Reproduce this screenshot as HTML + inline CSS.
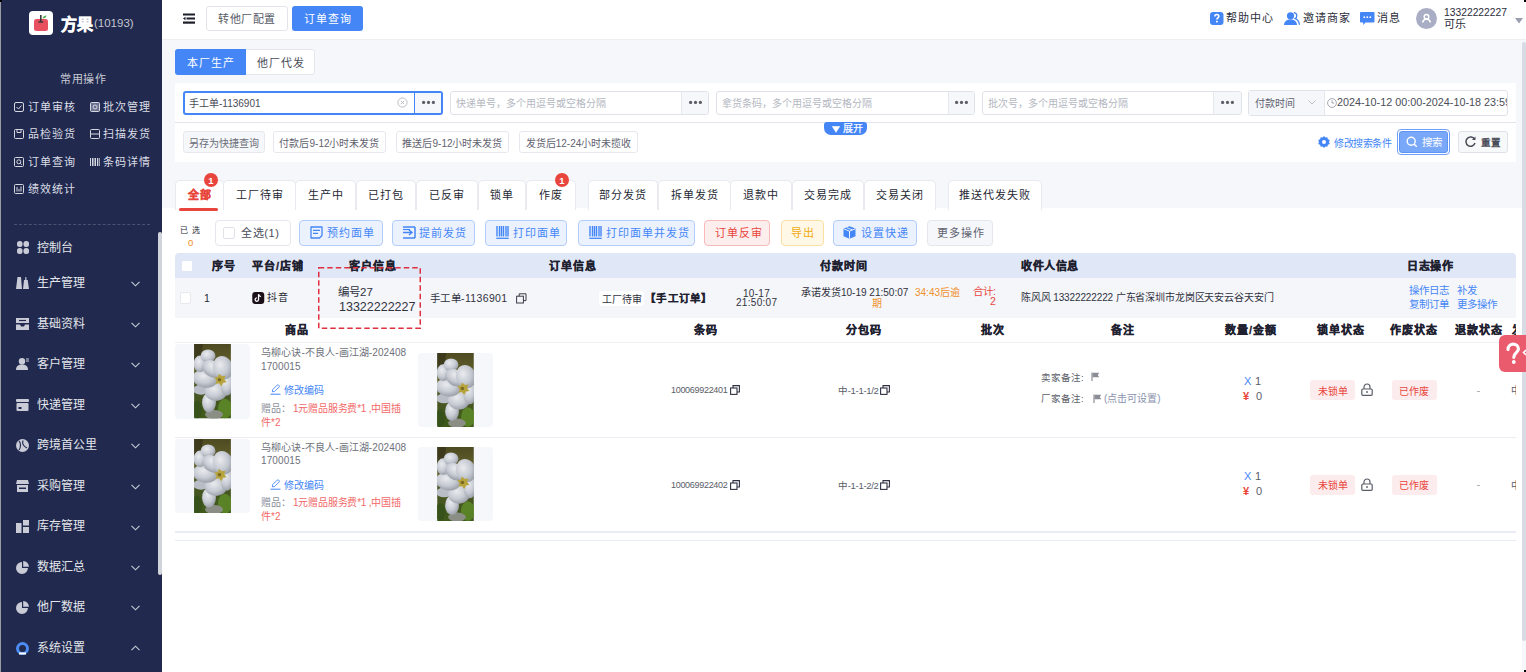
<!DOCTYPE html>
<html lang="zh-CN"><head><meta charset="utf-8">
<style>
*{box-sizing:border-box;margin:0;padding:0}
html,body{width:1526px;height:672px;overflow:hidden;background:#fff;font-family:"Liberation Sans",sans-serif;color:#333}
.a{position:absolute}
.t{white-space:nowrap}
.c{display:flex;align-items:center;justify-content:center;white-space:nowrap}
.sb{left:0;top:0;width:162px;height:672px;background:#212a4e;border-left:1px solid #9a9ca4}
.sbq{font-size:11px;letter-spacing:1px;line-height:16px;color:#dcdee6}
.mi{font-size:12px;line-height:18px;color:#e4e6ec}
.chev{width:9px;height:6px}
.hdr{left:162px;top:0;width:1364px;height:40px;background:#fff;border-bottom:1px solid #eceef2}
.page{left:162px;top:40px;width:1364px;height:632px;background:#f5f7fb}
.tab{top:179.5px;height:30px;background:#fff;border:1px solid #e8eaf0;border-bottom:none;border-radius:5px 5px 0 0}
.badge{width:14px;height:14px;border-radius:50%;background:#e8453c;color:#fff;font-size:9.5px;font-weight:bold}
.btnb{top:220px;height:26px;background:#ebf2fe;border:1px solid #b3cdfb;border-radius:4px}
.bt{top:224px;font-size:11px;line-height:18px;letter-spacing:1px}
.th{top:258px;font-size:11px;letter-spacing:1px;line-height:16px;font-weight:bold;color:#1f2130;-webkit-text-stroke:0.3px #1f2130}
.pn{font-size:10px;line-height:16px;color:#6e717b;letter-spacing:0.1px}
</style></head><body>
<!-- ================= SIDEBAR ================= -->
<div class="a sb"></div>
<div class="a" style="left:0;top:0;width:2px;height:2px;background:#000"></div>
<div class="a" style="left:29px;top:11px;width:24px;height:24px;background:#fff;border-radius:4px"></div>
<svg class="a" style="left:29px;top:11px" width="24" height="24" viewBox="0 0 24 24">
<rect x="5" y="8" width="14" height="12" rx="2.5" fill="#e8505f"/>
<rect x="11" y="4" width="1.6" height="7" fill="#3a3a3a"/><rect x="9.3" y="10.3" width="5" height="1.4" fill="#3a3a3a"/>
<path d="M13.5 7.5c0.5-2 2-3 4-3-0.3 2-1.8 3-4 3z" fill="#4caf50"/>
</svg>
<div class="a t" style="left:61px;top:12px;font-size:16px;font-weight:bold;color:#fff;line-height:26px;-webkit-text-stroke:0.6px #fff">方果</div>
<div class="a t" style="left:94px;top:13px;font-size:11.5px;color:#c4c6d0;line-height:20px">(10193)</div>
<div class="a t" style="left:60px;top:71px;font-size:11px;letter-spacing:0.5px;color:#c9cbd5;line-height:16px">常用操作</div>

<svg class="a" style="left:14px;top:101.5px" width="10" height="10" viewBox="0 0 10 10"><rect x="0.5" y="0.5" width="9" height="9" rx="1.5" fill="none" stroke="#d6d8e0"/><path d="M2.5 5l2 2 3-3.5" fill="none" stroke="#d6d8e0"/></svg>
<div class="a t sbq" style="left:28px;top:98.5px">订单审核</div>
<svg class="a" style="left:90px;top:101.5px" width="10" height="10" viewBox="0 0 10 10"><rect x="0.5" y="0.5" width="9" height="9" rx="1" fill="#6b7190" stroke="#d6d8e0"/><circle cx="5" cy="5" r="2" fill="none" stroke="#d6d8e0"/></svg>
<div class="a t sbq" style="left:103px;top:98.5px">批次管理</div>
<svg class="a" style="left:14px;top:129px" width="10" height="10" viewBox="0 0 10 10"><rect x="0.5" y="0.5" width="9" height="9" rx="1" fill="none" stroke="#d6d8e0"/><path d="M3 0.5v3h4v-3" fill="none" stroke="#d6d8e0"/></svg>
<div class="a t sbq" style="left:28px;top:126px">品检验货</div>
<svg class="a" style="left:90px;top:129px" width="10" height="10" viewBox="0 0 10 10"><rect x="0.5" y="0.5" width="9" height="9" rx="1" fill="none" stroke="#d6d8e0"/><path d="M0.5 5h9" stroke="#d6d8e0"/></svg>
<div class="a t sbq" style="left:103px;top:126px">扫描发货</div>
<svg class="a" style="left:14px;top:156.5px" width="10" height="10" viewBox="0 0 10 10"><rect x="0.5" y="0.5" width="9" height="9" rx="1" fill="none" stroke="#d6d8e0"/><circle cx="4.8" cy="4.8" r="2" fill="none" stroke="#d6d8e0"/><path d="M6.3 6.3l1.5 1.5" stroke="#d6d8e0"/></svg>
<div class="a t sbq" style="left:28px;top:153.5px">订单查询</div>
<svg class="a" style="left:90px;top:156.5px" width="10" height="10" viewBox="0 0 10 10"><path d="M0.5 1v8M2.5 1v8M4 1v8M5.5 1v8M7.5 1v8M9.2 1v8" stroke="#d6d8e0"/></svg>
<div class="a t sbq" style="left:103px;top:153.5px">条码详情</div>
<svg class="a" style="left:14px;top:184px" width="10" height="10" viewBox="0 0 10 10"><rect x="0.5" y="0.5" width="9" height="9" rx="1" fill="none" stroke="#d6d8e0"/><path d="M3 3v4.5M5 5v2.5M7 2.5v5" stroke="#d6d8e0"/></svg>
<div class="a t sbq" style="left:28px;top:181px">绩效统计</div>

<div class="a" style="left:14px;top:224px;width:136px;height:0;border-top:1px dashed #4a5272"></div>
<div class="a" style="left:158px;top:232px;width:4px;height:343px;background:#d2d4dc;border-radius:2px"></div>

<!-- menu -->
<svg class="a" style="left:17px;top:241px" width="12" height="13" viewBox="0 0 12 13"><rect x="0" y="0" width="5.5" height="6" rx="2.5" fill="#c9cbd6"/><rect x="6.5" y="0" width="5.5" height="6" rx="2.5" fill="#c9cbd6"/><rect x="0" y="7" width="5.5" height="6" rx="2.5" fill="#c9cbd6"/><rect x="6.5" y="7" width="5.5" height="6" rx="2.5" fill="#c9cbd6"/></svg>
<div class="a t mi" style="left:37px;top:239px">控制台</div>

<svg class="a" style="left:16px;top:277px" width="13" height="12" viewBox="0 0 13 12"><path d="M0 12L1.5 0h3.5L6 12z M7 12L8 3h1.2L9.3 0h1L10.5 3h1.2L13 12z" fill="#c9cbd6"/></svg>
<div class="a t mi" style="left:37px;top:274px">生产管理</div>
<svg class="a chev" style="left:131px;top:281px" viewBox="0 0 9 6"><path d="M0.5 0.8L4.5 4.8 8.5 0.8" fill="none" stroke="#c9cbd6" stroke-width="1.1"/></svg>

<svg class="a" style="left:16px;top:318px" width="13" height="12" viewBox="0 0 13 12"><path d="M0 0h13v5H0z M0 6.5h4l1 2h3l1-2h4V12H0z" fill="#c9cbd6"/><path d="M3 2.5h7" stroke="#212a4e" stroke-width="1.2"/></svg>
<div class="a t mi" style="left:37px;top:315px">基础资料</div>
<svg class="a chev" style="left:131px;top:322px" viewBox="0 0 9 6"><path d="M0.5 0.8L4.5 4.8 8.5 0.8" fill="none" stroke="#c9cbd6" stroke-width="1.1"/></svg>

<svg class="a" style="left:16px;top:358px" width="13" height="12" viewBox="0 0 13 12"><circle cx="6" cy="3.2" r="3.2" fill="#c9cbd6"/><path d="M0 12c0-4 2.5-5.5 6-5.5s6 1.5 6 5.5z" fill="#c9cbd6"/><path d="M10 1h3M10 3h3" stroke="#c9cbd6"/></svg>
<div class="a t mi" style="left:37px;top:355px">客户管理</div>
<svg class="a chev" style="left:131px;top:362px" viewBox="0 0 9 6"><path d="M0.5 0.8L4.5 4.8 8.5 0.8" fill="none" stroke="#c9cbd6" stroke-width="1.1"/></svg>

<svg class="a" style="left:16px;top:399px" width="13" height="12" viewBox="0 0 13 12"><rect x="0" y="0" width="13" height="3" rx="1" fill="#c9cbd6"/><rect x="0.5" y="4" width="12" height="8" rx="1" fill="#c9cbd6"/><rect x="2.5" y="8" width="3" height="2" fill="#212a4e"/></svg>
<div class="a t mi" style="left:37px;top:396px">快递管理</div>
<svg class="a chev" style="left:131px;top:403px" viewBox="0 0 9 6"><path d="M0.5 0.8L4.5 4.8 8.5 0.8" fill="none" stroke="#c9cbd6" stroke-width="1.1"/></svg>

<svg class="a" style="left:16px;top:439px" width="13" height="13" viewBox="0 0 13 13"><circle cx="6.5" cy="6.5" r="6.5" fill="#c9cbd6"/><path d="M3 2c2 2 2 6 0 9M7 1.5c-1 3 1 6 4 7.5" fill="none" stroke="#212a4e" stroke-width="1.1"/></svg>
<div class="a t mi" style="left:37px;top:436px">跨境首公里</div>
<svg class="a chev" style="left:131px;top:443px" viewBox="0 0 9 6"><path d="M0.5 0.8L4.5 4.8 8.5 0.8" fill="none" stroke="#c9cbd6" stroke-width="1.1"/></svg>

<svg class="a" style="left:16px;top:480px" width="13" height="12" viewBox="0 0 13 12"><path d="M1 0h11l1 4H0z" fill="#c9cbd6"/><rect x="1" y="5" width="11" height="7" fill="#c9cbd6"/><rect x="3" y="7.5" width="7" height="1.5" fill="#212a4e"/></svg>
<div class="a t mi" style="left:37px;top:477px">采购管理</div>
<svg class="a chev" style="left:131px;top:484px" viewBox="0 0 9 6"><path d="M0.5 0.8L4.5 4.8 8.5 0.8" fill="none" stroke="#c9cbd6" stroke-width="1.1"/></svg>

<svg class="a" style="left:16px;top:520px" width="13" height="13" viewBox="0 0 13 13"><rect x="0" y="3" width="5.5" height="10" fill="#c9cbd6"/><rect x="7" y="0" width="6" height="5.5" fill="#c9cbd6"/><rect x="7" y="7" width="6" height="6" fill="#c9cbd6"/></svg>
<div class="a t mi" style="left:37px;top:517px">库存管理</div>
<svg class="a chev" style="left:131px;top:525px" viewBox="0 0 9 6"><path d="M0.5 0.8L4.5 4.8 8.5 0.8" fill="none" stroke="#c9cbd6" stroke-width="1.1"/></svg>

<svg class="a" style="left:16px;top:561px" width="13" height="13" viewBox="0 0 13 13"><path d="M6 1A6 6 0 1 0 12 7H6z" fill="#c9cbd6"/><path d="M7.2 0A5.8 5.8 0 0 1 13 5.8H7.2z" fill="#c9cbd6"/></svg>
<div class="a t mi" style="left:37px;top:558px">数据汇总</div>
<svg class="a chev" style="left:131px;top:565px" viewBox="0 0 9 6"><path d="M0.5 0.8L4.5 4.8 8.5 0.8" fill="none" stroke="#c9cbd6" stroke-width="1.1"/></svg>

<svg class="a" style="left:16px;top:601px" width="13" height="13" viewBox="0 0 13 13"><path d="M6 1A6 6 0 1 0 12 7H6z" fill="#c9cbd6"/><path d="M7.2 0A5.8 5.8 0 0 1 13 5.8H7.2z" fill="#c9cbd6"/></svg>
<div class="a t mi" style="left:37px;top:598px">他厂数据</div>
<svg class="a chev" style="left:131px;top:605px" viewBox="0 0 9 6"><path d="M0.5 0.8L4.5 4.8 8.5 0.8" fill="none" stroke="#c9cbd6" stroke-width="1.1"/></svg>

<svg class="a" style="left:16px;top:642px" width="13" height="13" viewBox="0 0 13 13"><circle cx="6.5" cy="6.5" r="5" fill="none" stroke="#4b8cf5" stroke-width="3"/><path d="M3 11.5h7" stroke="#fff" stroke-width="2"/></svg>
<div class="a t mi" style="left:37px;top:639px">系统设置</div>
<svg class="a chev" style="left:131px;top:645px" viewBox="0 0 9 6"><path d="M0.5 5.2L4.5 1.2 8.5 5.2" fill="none" stroke="#c9cbd6" stroke-width="1.1"/></svg>

<!-- ================= HEADER ================= -->
<div class="a hdr"></div>
<svg class="a" style="left:183px;top:13px" width="12" height="11" viewBox="0 0 12 11"><rect x="0" y="0.5" width="12" height="2" fill="#1d1d2b"/><rect x="3.5" y="4.5" width="8.5" height="2" fill="#1d1d2b"/><path d="M0 5.5L2.5 3.8v3.4z" fill="#1d1d2b"/><rect x="0" y="8.5" width="12" height="2.2" fill="#1d1d2b"/></svg>
<div class="a c" style="left:206px;top:6px;width:82px;height:25px;border:1px solid #e2e4ea;border-radius:3px;background:#fff;font-size:11px;letter-spacing:0.5px;color:#555a66;padding-bottom:2px">转他厂配置</div>
<div class="a c" style="left:292px;top:6px;width:71px;height:25px;border-radius:3px;background:#4486f6;font-size:11px;letter-spacing:1px;color:#fff;padding-bottom:2px">订单查询</div>

<svg class="a" style="left:1210px;top:12px" width="14" height="13" viewBox="0 0 14 13"><rect x="0" y="0" width="13.5" height="13" rx="3" fill="#4486f6"/><path d="M4.8 4.6c0-1.3 0.9-2.1 2-2.1s2 0.7 2 1.9c0 1.3-1.9 1.5-1.9 3" fill="none" stroke="#fff" stroke-width="1.6"/><rect x="6" y="8.8" width="1.8" height="1.6" fill="#fff"/></svg>
<div class="a t" style="left:1226px;top:10px;font-size:11px;letter-spacing:1px;line-height:17px;color:#2b2d3a">帮助中心</div>
<svg class="a" style="left:1284px;top:12px" width="17" height="13" viewBox="0 0 17 13"><circle cx="6.5" cy="3.8" r="3.6" fill="#4486f6"/><path d="M0 13c0-3.6 2.8-5.6 6.5-5.6S13 9.4 13 13z" fill="#4486f6"/><path d="M9.8 0.6c1.8 0.2 3 1.5 3 3.2 0 1.2-0.6 2.2-1.6 2.8 2.4 0.9 4 2.8 4.2 6.2" fill="none" stroke="#4486f6" stroke-width="1.3"/></svg>
<div class="a t" style="left:1303px;top:10px;font-size:11px;letter-spacing:1px;line-height:17px;color:#2b2d3a">邀请商家</div>
<svg class="a" style="left:1360px;top:12px" width="15" height="14" viewBox="0 0 15 14"><path d="M0 1a1 1 0 0 1 1-1h12.5a1 1 0 0 1 1 1v8.5a1 1 0 0 1-1 1H5.5L3.2 13V10.5H1a1 1 0 0 1-1-1z" fill="#4486f6"/><circle cx="4.3" cy="5.2" r="0.9" fill="#fff"/><circle cx="7.3" cy="5.2" r="0.9" fill="#fff"/><circle cx="10.3" cy="5.2" r="0.9" fill="#fff"/></svg>
<div class="a t" style="left:1377px;top:10px;font-size:11px;letter-spacing:1px;line-height:17px;color:#2b2d3a">消息</div>
<div class="a" style="left:1416px;top:8px;width:21px;height:21px;border-radius:50%;background:#a9aec4"></div>
<svg class="a" style="left:1416px;top:8px" width="21" height="21" viewBox="0 0 21 21"><circle cx="10.5" cy="8.8" r="2.3" fill="none" stroke="#fff" stroke-width="1.5"/><path d="M6.5 14.5c0.8-2.5 2.2-3.6 4-3.6s3.2 1.1 4 3.6" fill="none" stroke="#fff" stroke-width="1.5"/></svg>
<div class="a t" style="left:1444px;top:6px;font-size:10.3px;line-height:13px;color:#2b2d3a">13322222227</div>
<div class="a t" style="left:1444px;top:16px;font-size:11px;line-height:16px;color:#2b2d3a">可乐</div>
<svg class="a" style="left:1515px;top:18px" width="8" height="6" viewBox="0 0 8 6"><path d="M0 0h8L4 5.5z" fill="#9a9eae"/></svg>
<div class="a" style="left:1524px;top:0;width:2px;height:2px;background:#000"></div>

<!-- ================= PAGE ================= -->
<div class="a page"></div>
<!-- seg -->
<div class="a" style="left:175px;top:49px;width:140px;height:26px;border:1px solid #e6e8ee;border-radius:3px;background:#fff"></div>
<div class="a c" style="left:175px;top:49px;width:71px;height:26px;border-radius:3px 0 0 3px;background:#4486f6;font-size:11px;letter-spacing:1px;color:#fff">本厂生产</div>
<div class="a c" style="left:246px;top:49px;width:69px;height:26px;font-size:11px;letter-spacing:1px;color:#4a4d58">他厂代发</div>

<!-- search panel -->
<div class="a" style="left:175px;top:83px;width:1341px;height:79px;background:#fff"></div>
<!-- input1 -->
<div class="a" style="left:183px;top:91px;width:260px;height:24px;border:2px solid #4486f6;border-radius:3px;background:#fff"></div>
<div class="a" style="left:414px;top:93px;width:27px;height:20px;background:#f5f7fa;border-left:1.3px solid #4486f6"></div>
<div class="a t" style="left:189px;top:96px;font-size:10px;line-height:16px;color:#4a4d58">手工单-1136901</div>
<svg class="a" style="left:397px;top:97px" width="11" height="11" viewBox="0 0 11 11"><circle cx="5.5" cy="5.5" r="4.6" fill="none" stroke="#b4b6bd" stroke-width="0.9"/><path d="M3.8 3.8l3.4 3.4M7.2 3.8l-3.4 3.4" stroke="#b4b6bd" stroke-width="0.9"/></svg>
<svg class="a" style="left:421px;top:100px" width="15" height="5" viewBox="0 0 15 5"><circle cx="2.6" cy="2.4" r="1.6" fill="#5a5d66"/><circle cx="7.5" cy="2.4" r="1.6" fill="#5a5d66"/><circle cx="12.4" cy="2.4" r="1.6" fill="#5a5d66"/></svg>
<!-- input2 -->
<div class="a" style="left:450px;top:91px;width:259px;height:24px;border:1px solid #dfe2e8;border-radius:3px;background:#fff"></div>
<div class="a" style="left:681px;top:92px;width:27px;height:22px;background:#f5f7fa;border-left:1px solid #e6e8ee;border-radius:0 2px 2px 0"></div>
<div class="a t" style="left:456px;top:96px;font-size:10px;line-height:16px;color:#b4b7bf">快递单号，多个用逗号或空格分隔</div>
<svg class="a" style="left:688px;top:100px" width="15" height="5" viewBox="0 0 15 5"><circle cx="2.6" cy="2.4" r="1.6" fill="#5a5d66"/><circle cx="7.5" cy="2.4" r="1.6" fill="#5a5d66"/><circle cx="12.4" cy="2.4" r="1.6" fill="#5a5d66"/></svg>
<!-- input3 -->
<div class="a" style="left:716px;top:91px;width:259px;height:24px;border:1px solid #dfe2e8;border-radius:3px;background:#fff"></div>
<div class="a" style="left:948px;top:92px;width:26px;height:22px;background:#f5f7fa;border-left:1px solid #e6e8ee;border-radius:0 2px 2px 0"></div>
<div class="a t" style="left:722px;top:96px;font-size:10px;line-height:16px;color:#b4b7bf">拿货条码，多个用逗号或空格分隔</div>
<svg class="a" style="left:954px;top:100px" width="15" height="5" viewBox="0 0 15 5"><circle cx="2.6" cy="2.4" r="1.6" fill="#5a5d66"/><circle cx="7.5" cy="2.4" r="1.6" fill="#5a5d66"/><circle cx="12.4" cy="2.4" r="1.6" fill="#5a5d66"/></svg>
<!-- input4 -->
<div class="a" style="left:982px;top:91px;width:260px;height:24px;border:1px solid #dfe2e8;border-radius:3px;background:#fff"></div>
<div class="a" style="left:1213px;top:92px;width:28px;height:22px;background:#f5f7fa;border-left:1px solid #e6e8ee;border-radius:0 2px 2px 0"></div>
<div class="a t" style="left:988px;top:96px;font-size:10px;line-height:16px;color:#b4b7bf">批次号，多个用逗号或空格分隔</div>
<svg class="a" style="left:1220px;top:100px" width="15" height="5" viewBox="0 0 15 5"><circle cx="2.6" cy="2.4" r="1.6" fill="#5a5d66"/><circle cx="7.5" cy="2.4" r="1.6" fill="#5a5d66"/><circle cx="12.4" cy="2.4" r="1.6" fill="#5a5d66"/></svg>
<!-- date -->
<div class="a" style="left:1248px;top:90px;width:260px;height:26px;border:1px solid #dfe2e8;border-radius:3px;background:#fff;overflow:hidden"></div>
<div class="a" style="left:1249px;top:91px;width:76px;height:24px;background:#f5f7fa;border-right:1px solid #e6e8ee"></div>
<div class="a t" style="left:1255px;top:96px;font-size:10px;line-height:16px;color:#5f6270">付款时间</div>
<svg class="a" style="left:1308px;top:100px" width="8" height="5" viewBox="0 0 8 5"><path d="M0.5 0.5L4 4 7.5 0.5" fill="none" stroke="#b4b7bf" stroke-width="0.9"/></svg>
<svg class="a" style="left:1327px;top:98px" width="10" height="10" viewBox="0 0 10 10"><circle cx="5" cy="5" r="4.4" fill="none" stroke="#9a9da8" stroke-width="0.9"/><path d="M5 2.3V5h2.3" fill="none" stroke="#9a9da8" stroke-width="0.9"/></svg>
<div class="a" style="left:1337px;top:91px;width:170px;height:24px;overflow:hidden"><div class="a t" style="left:0;top:3px;font-size:10.8px;line-height:17px;color:#4a4d58">2024-10-12 00:00-2024-10-18 23:59</div></div>

<div class="a" style="left:175px;top:122px;width:1341px;height:1px;background:#e2e5ec"></div>
<div class="a" style="left:824px;top:122px;width:43px;height:13px;background:#4486f6;border-radius:3px 3px 7px 7px"></div>
<svg class="a" style="left:832px;top:126px" width="8" height="7" viewBox="0 0 8 7"><path d="M0.3 0.5h7.4L4 6.3z" fill="#fff" stroke="#fff" stroke-width="0.6" stroke-linejoin="round"/></svg>
<div class="a t" style="left:842.5px;top:121px;font-size:10px;line-height:15px;color:#fff;-webkit-text-stroke:0.2px #fff">展开</div>

<!-- quick btns -->
<div class="a c" style="left:183px;top:131px;width:82px;height:22px;background:#f5f7fa;border:1px solid #e6e8ee;border-radius:3px;font-size:10px;color:#6a6d78">另存为快捷查询</div>
<div class="a c" style="left:273px;top:131px;width:113px;height:22px;background:#fff;border:1px solid #e6e8ee;border-radius:3px;font-size:10px;color:#5f6270">付款后9-12小时未发货</div>
<div class="a c" style="left:396px;top:131px;width:113px;height:22px;background:#fff;border:1px solid #e6e8ee;border-radius:3px;font-size:10px;color:#5f6270">推送后9-12小时未发货</div>
<div class="a c" style="left:519px;top:131px;width:119px;height:22px;background:#fff;border:1px solid #e6e8ee;border-radius:3px;font-size:10px;color:#5f6270">发货后12-24小时未揽收</div>

<svg class="a" style="left:1318px;top:136px" width="12" height="12" viewBox="0 0 12 12"><path d="M6 0l1.3 1.6 2-0.4 0.6 2 1.9 0.9-0.8 1.9 0.8 1.9-1.9 0.9-0.6 2-2-0.4L6 12 4.7 10.4l-2 0.4-0.6-2L0.2 7.9 1 6 0.2 4.1 2.1 3.2l0.6-2 2 0.4z" fill="#4486f6"/><circle cx="6" cy="6" r="2" fill="#fff"/></svg>
<div class="a t" style="left:1334px;top:135.5px;font-size:10px;line-height:16px;letter-spacing:-0.4px;color:#4486f6">修改搜索条件</div>
<div class="a" style="left:1397px;top:129px;width:53px;height:26px;background:#fff;border:1px solid #6e9ef7;border-radius:4px"></div><div class="a" style="left:1399px;top:131px;width:49px;height:22px;background:#7aa8f8;border:1px solid #5d95f6;border-radius:3px"></div>
<svg class="a" style="left:1406px;top:136px" width="12" height="12" viewBox="0 0 12 12"><circle cx="5.2" cy="5.2" r="4" fill="none" stroke="#fff" stroke-width="1.4"/><path d="M8.2 8.2l2.6 2.6" stroke="#fff" stroke-width="1.4"/></svg>
<div class="a t" style="left:1422px;top:134px;font-size:10.5px;line-height:16px;color:#fff">搜索</div>
<div class="a" style="left:1458px;top:131px;width:50px;height:22px;background:#f7f8fa;border:1px solid #dfe2e8;border-radius:3px"></div>
<svg class="a" style="left:1465px;top:136px" width="11" height="11" viewBox="0 0 11 11"><path d="M9.6 3.4A4.6 4.6 0 1 0 10 7" fill="none" stroke="#4a4d58" stroke-width="1.5"/><path d="M10.5 0.5v3.6H6.9" fill="#4a4d58"/></svg>
<div class="a t" style="left:1481px;top:135px;font-size:9.5px;line-height:16px;letter-spacing:0.3px;color:#4a4d58;font-weight:bold">重置</div>

<!-- content panel -->
<div class="a" style="left:162px;top:208px;width:1360px;height:464px;background:#fff"></div>
<div class="a" style="left:1522px;top:42px;width:4px;height:599px;background:#d8dbe3;border-radius:2px"></div>
<div class="a" style="left:1524px;top:670px;width:2px;height:2px;background:#000"></div>
<!-- tabs -->
<div class="a tab" style="left:175px;width:49px"></div>
<div class="a c" style="left:175px;top:180px;width:49px;height:28px;font-size:11px;letter-spacing:1px;font-weight:bold;color:#e8453c;-webkit-text-stroke:0.35px #e8453c">全部</div>
<div class="a tab" style="left:223px;width:73px"></div>
<div class="a c" style="left:223px;top:180px;width:73px;height:28px;font-size:11px;letter-spacing:1px;color:#262833">工厂待审</div>
<div class="a tab" style="left:295px;width:61px"></div>
<div class="a c" style="left:295px;top:180px;width:61px;height:28px;font-size:11px;letter-spacing:1px;color:#262833">生产中</div>
<div class="a tab" style="left:356px;width:60px"></div>
<div class="a c" style="left:356px;top:180px;width:60px;height:28px;font-size:11px;letter-spacing:1px;color:#262833">已打包</div>
<div class="a tab" style="left:416px;width:62px"></div>
<div class="a c" style="left:416px;top:180px;width:62px;height:28px;font-size:11px;letter-spacing:1px;color:#262833">已反审</div>
<div class="a tab" style="left:478px;width:48px"></div>
<div class="a c" style="left:478px;top:180px;width:48px;height:28px;font-size:11px;letter-spacing:1px;color:#262833">锁单</div>
<div class="a tab" style="left:526px;width:50px"></div>
<div class="a c" style="left:526px;top:180px;width:50px;height:28px;font-size:11px;letter-spacing:1px;color:#262833">作废</div>
<div class="a tab" style="left:588px;width:70px"></div>
<div class="a c" style="left:588px;top:180px;width:70px;height:28px;font-size:11px;letter-spacing:1px;color:#262833">部分发货</div>
<div class="a tab" style="left:658px;width:73px"></div>
<div class="a c" style="left:658px;top:180px;width:73px;height:28px;font-size:11px;letter-spacing:1px;color:#262833">拆单发货</div>
<div class="a tab" style="left:730px;width:62px"></div>
<div class="a c" style="left:730px;top:180px;width:62px;height:28px;font-size:11px;letter-spacing:1px;color:#262833">退款中</div>
<div class="a tab" style="left:792px;width:72px"></div>
<div class="a c" style="left:792px;top:180px;width:72px;height:28px;font-size:11px;letter-spacing:1px;color:#262833">交易完成</div>
<div class="a tab" style="left:864px;width:72px"></div>
<div class="a c" style="left:864px;top:180px;width:72px;height:28px;font-size:11px;letter-spacing:1px;color:#262833">交易关闭</div>
<div class="a tab" style="left:948px;width:94px"></div>
<div class="a c" style="left:948px;top:180px;width:94px;height:28px;font-size:11px;letter-spacing:1px;color:#262833">推送代发失败</div>
<div class="a" style="left:179px;top:208px;width:39px;height:3px;background:#e8453c;border-radius:2px"></div>
<div class="a c badge" style="left:204px;top:173px">1</div>
<div class="a c badge" style="left:555px;top:173px">1</div>
<!-- actions -->
<div class="a t" style="left:180px;top:223.5px;font-size:8px;line-height:14px;letter-spacing:4px;color:#262833">已选</div>
<div class="a t" style="left:188px;top:236px;font-size:9.5px;line-height:13px;color:#f0902a">0</div>
<div class="a" style="left:215px;top:220px;width:76px;height:26px;border:1px solid #e4e7ed;border-radius:4px;background:#fff"></div>
<div class="a" style="left:223px;top:227px;width:12px;height:12px;border:1px solid #dfe2e8;border-radius:2px;background:#fff"></div>
<div class="a t" style="left:241px;top:224px;font-size:11px;line-height:18px;letter-spacing:0.6px;color:#4a4d58">全选(1)</div>

<div class="a btnb" style="left:299px;width:84px"></div>
<svg class="a" style="left:310px;top:226px" width="13" height="13" viewBox="0 0 13 13"><path d="M1 1h11v8.5L9.5 12H1z" fill="none" stroke="#4486f6" stroke-width="1.3" stroke-linejoin="round"/><path d="M3 4.3h7M3 7.3h5" stroke="#4486f6" stroke-width="1.2"/></svg>
<div class="a t bt" style="left:327px;color:#4486f6">预约面单</div>

<div class="a btnb" style="left:392px;width:83px"></div>
<svg class="a" style="left:402px;top:226px" width="14" height="13" viewBox="0 0 14 13"><path d="M1 1h12M1 12h12M13 1v11" fill="none" stroke="#4486f6" stroke-width="1.5"/><path d="M1 6.5h8" stroke="#4486f6" stroke-width="1.5"/><path d="M7 4l3 2.5L7 9" fill="none" stroke="#4486f6" stroke-width="1.5"/><path d="M1 3.5h7" stroke="#4486f6" stroke-width="1.2"/></svg>
<div class="a t bt" style="left:419px;color:#4486f6">提前发货</div>

<div class="a btnb" style="left:485px;width:82px"></div>
<svg class="a" style="left:496px;top:226px" width="13" height="13" viewBox="0 0 13 13"><path d="M1 0v10.5M3.5 0v10.5M5.5 0v10.5M7.5 0v10.5M10 0v10.5M12 0v10.5" stroke="#4486f6" stroke-width="1.4"/><path d="M0.3 12.3h12.4" stroke="#4486f6" stroke-width="1.3"/></svg>
<div class="a t bt" style="left:513px;color:#4486f6">打印面单</div>

<div class="a btnb" style="left:578px;width:117px"></div>
<svg class="a" style="left:589px;top:226px" width="13" height="13" viewBox="0 0 13 13"><path d="M1 0v10.5M3.5 0v10.5M5.5 0v10.5M7.5 0v10.5M10 0v10.5M12 0v10.5" stroke="#4486f6" stroke-width="1.4"/><path d="M0.3 12.3h12.4" stroke="#4486f6" stroke-width="1.3"/></svg>
<div class="a t bt" style="left:606px;color:#4486f6">打印面单并发货</div>

<div class="a btnb" style="left:704px;width:66px;background:#fdeeee;border-color:#f7b9b9"></div>
<div class="a t bt" style="left:715px;color:#e8453c">订单反审</div>

<div class="a btnb" style="left:781px;width:43px;background:#fff8e6;border-color:#fbe0a3"></div>
<div class="a t bt" style="left:791px;color:#f2a90f">导出</div>

<div class="a btnb" style="left:833px;width:84px"></div>
<svg class="a" style="left:843px;top:226px" width="13" height="13" viewBox="0 0 13 13"><path d="M6.5 0.3L12.5 2.6v7.6L6.5 12.7 0.5 10.2V2.6z" fill="#4486f6"/><path d="M0.8 2.8L6.5 5.2 12.2 2.8M6.5 5.2v7.3" fill="none" stroke="#fff" stroke-width="0.9"/><path d="M3.5 1.5l5.8 2.4" stroke="#fff" stroke-width="0.8"/></svg>
<div class="a t bt" style="left:861px;color:#4486f6">设置快递</div>

<div class="a btnb" style="left:927px;width:66px;background:#f5f7fa;border-color:#e4e7ed"></div>
<div class="a t bt" style="left:937px;color:#5f6270">更多操作</div>
<svg width="0" height="0" style="position:absolute">
<defs>
<linearGradient id="fbg" x1="0" y1="0" x2="0" y2="1"><stop offset="0" stop-color="#4e4a22"/><stop offset="0.3" stop-color="#63612c"/><stop offset="0.6" stop-color="#4a5424"/><stop offset="1" stop-color="#3e5a1a"/></linearGradient>
<radialGradient id="pet" cx="0.4" cy="0.35" r="0.8"><stop offset="0" stop-color="#e9ebee"/><stop offset="0.5" stop-color="#c6cad2"/><stop offset="1" stop-color="#848a94"/></radialGradient>
<symbol id="flower" viewBox="0 0 37 75">
<rect width="37" height="75" fill="url(#fbg)"/>
<path d="M0 0h9l-3 22H0z" fill="#34321a" opacity="0.7"/>
<ellipse cx="31" cy="65" rx="7" ry="10" fill="#5e8a28" opacity="0.85"/>
<ellipse cx="3" cy="66" rx="5" ry="9" fill="#34501a" opacity="0.8"/>
<ellipse cx="20" cy="71" rx="9" ry="4.5" fill="#8a8e84"/>
<ellipse cx="15" cy="59" rx="7" ry="10" fill="url(#pet)"/>
<ellipse cx="7" cy="46" rx="8" ry="5" fill="#b9bec6"/>
<ellipse cx="22" cy="48" rx="11" ry="9.5" fill="url(#pet)"/>
<ellipse cx="33" cy="41" rx="6.5" ry="11" fill="url(#pet)"/>
<ellipse cx="11" cy="35" rx="12.5" ry="9" transform="rotate(10 11 35)" fill="url(#pet)"/>
<ellipse cx="6" cy="20" rx="6.5" ry="8.5" fill="url(#pet)"/>
<ellipse cx="14" cy="12" rx="7.5" ry="6.5" fill="url(#pet)"/>
<ellipse cx="18" cy="25" rx="10.5" ry="8" transform="rotate(35 18 25)" fill="url(#pet)"/>
<ellipse cx="29" cy="24" rx="10" ry="12" transform="rotate(-15 29 24)" fill="url(#pet)"/>
<path d="M25 30l3 2.5 3.5-0.5-1.2 3.5 2.4 3-3.5 0.6-1.8 3.5-2.4-3-3.5 0.6 1.2-3.5-2.4-3 3.5-0.6z" fill="#b8a43c"/>
<circle cx="25.5" cy="36" r="1.8" fill="#7a6a22"/>
</symbol>
</defs></svg>

<!-- table header -->
<div class="a" style="left:175px;top:253px;width:1341px;height:25px;background:#e0e7f6;border-radius:4px 4px 0 0"></div>
<div class="a" style="left:182px;top:261px;width:10px;height:10px;background:#fff;border-radius:1px"></div>
<div class="a t th" style="left:212px">序号</div>
<div class="a t th" style="left:252px">平台/店铺</div>
<div class="a t th" style="left:349px">客户信息</div>
<div class="a t th" style="left:549px">订单信息</div>
<div class="a t th" style="left:820px">付款时间</div>
<div class="a t th" style="left:1021px;letter-spacing:0.5px">收件人信息</div>
<div class="a t th" style="left:1407px;letter-spacing:0.7px">日志操作</div>

<!-- row 1 -->
<div class="a" style="left:175px;top:278px;width:1341px;height:39.5px;background:#f5f6fa"></div>
<div class="a" style="left:179.5px;top:292px;width:11.5px;height:11.5px;background:#fff;border:1px solid #e6e8ee;border-radius:2px"></div>
<div class="a t" style="left:204px;top:290px;font-size:10.5px;line-height:16px;color:#262833">1</div>
<svg class="a" style="left:252px;top:291.5px" width="12.5" height="12" viewBox="0 0 12 12"><rect width="12" height="12" rx="3" fill="#1c1018"/><path d="M6.3 2.2v5.4a1.7 1.7 0 1 1-1.7-1.7" fill="none" stroke="#fff" stroke-width="1.3"/><path d="M6.3 2.3c0.3 1.3 1.2 2.1 2.5 2.2" fill="none" stroke="#fff" stroke-width="1.2"/></svg>
<div class="a t" style="left:267px;top:289px;font-size:10px;letter-spacing:0.5px;line-height:17px;color:#262833">抖音</div>
<div class="a t" style="left:338px;top:284.5px;font-size:11.5px;line-height:15px;color:#303240">编号27</div>
<div class="a t" style="left:339px;top:299.5px;font-size:12.5px;line-height:15px;color:#303240">13322222227</div>
<div class="a t" style="left:430px;top:290px;font-size:10.5px;line-height:16px;letter-spacing:0.35px;color:#303240">手工单-1136901</div>
<svg class="a" style="left:516px;top:293px" width="11" height="11" viewBox="0 0 11 11"><rect x="0.6" y="3.2" width="6.8" height="6.8" fill="none" stroke="#3a3c48" stroke-width="1"/><path d="M3.2 3.2V0.8h6.8v6.8H7.4" fill="none" stroke="#3a3c48" stroke-width="1"/></svg>
<div class="a c" style="left:599px;top:291px;width:45px;height:14.5px;background:#fff;border-radius:3px;font-size:10px;color:#303240">工厂待审</div>
<div class="a t" style="left:645px;top:290px;font-size:10.5px;line-height:16px;font-weight:bold;letter-spacing:1.3px;color:#1f2130;-webkit-text-stroke:0.2px #1f2130">【手工订单】</div>
<div class="a t" style="left:743px;top:287.5px;font-size:10px;line-height:11px;color:#303240;letter-spacing:0.3px">10-17</div>
<div class="a t" style="left:736px;top:296.5px;font-size:10px;line-height:11px;color:#303240;letter-spacing:0.3px">21:50:07</div>
<div class="a t" style="left:801px;top:287px;font-size:10px;line-height:11px;color:#303240">承诺发货10-19 21:50:07</div>
<div class="a t" style="left:915px;top:287px;font-size:10px;line-height:11px;color:#f0902a">34:43后逾</div>
<div class="a t" style="left:872px;top:297.5px;font-size:10px;line-height:11px;color:#f0902a">期</div>
<div class="a t" style="left:973px;top:286px;font-size:10.5px;line-height:11px;color:#e8453c">合计:</div>
<div class="a t" style="left:990px;top:296px;font-size:10.5px;line-height:11px;color:#e8453c">2</div>
<div class="a t" style="left:1021px;top:290px;font-size:10px;line-height:16px;color:#303240;letter-spacing:-0.13px">陈风风 13322222222 广东省深圳市龙岗区天安云谷天安门</div>
<div class="a t" style="left:1409px;top:283px;font-size:10.5px;line-height:14px;color:#4486f6">操作日志</div><div class="a t" style="left:1457px;top:283px;font-size:10.5px;line-height:14px;color:#4486f6">补发</div>
<div class="a t" style="left:1409px;top:297px;font-size:10.5px;line-height:14px;color:#4486f6">复制订单</div><div class="a t" style="left:1457px;top:297px;font-size:10.5px;line-height:14px;color:#4486f6">更多操作</div>

<!-- dashed highlight -->
<svg class="a" style="left:318px;top:267px" width="103" height="62"><rect x="0.75" y="0.75" width="101.5" height="60.5" fill="none" stroke="#e03040" stroke-width="1.5" stroke-dasharray="5.5 3"/></svg>

<!-- item header -->
<div class="a t th" style="left:285px;top:322px">商品</div>
<div class="a t th" style="left:694px;top:322px">条码</div>
<div class="a t th" style="left:846px;top:322px">分包码</div>
<div class="a t th" style="left:981px;top:322px">批次</div>
<div class="a t th" style="left:1111px;top:322px">备注</div>
<div class="a t th" style="left:1225px;top:322px">数量/金额</div>
<div class="a t th" style="left:1317px;top:322px">锁单状态</div>
<div class="a t th" style="left:1390px;top:322px">作废状态</div>
<div class="a t th" style="left:1455px;top:322px">退款状态</div>
<div class="a" style="left:1508px;top:318px;width:8px;height:24px;overflow:hidden"><div class="a t th" style="left:4px;top:4px">发</div></div>
<div class="a" style="left:175px;top:342px;width:1341px;height:1px;background:#eef0f4"></div>


<div class="a" style="left:175px;top:344.4px;width:74.5px;height:74.5px;background:#f5f7fa;border-radius:4px"></div>
<svg class="a" style="left:194px;top:344.4px" width="37" height="74.5"><use href="#flower"/></svg>
<div class="a t pn" style="left:261px;top:345px">乌柳心诀-不良人-画江湖-202408</div>
<div class="a t pn" style="left:261px;top:358.5px">1700015</div>
<svg class="a" style="left:270px;top:384.0px" width="11" height="11" viewBox="0 0 11 11"><path d="M2.3 7.8L2.7 5.6 7.2 1.1a1 1 0 0 1 1.4 0l0.5 0.5a1 1 0 0 1 0 1.4L4.6 7.5z" fill="none" stroke="#4486f6" stroke-width="0.9" stroke-linejoin="round"/><path d="M0.5 10.2h10" stroke="#4486f6" stroke-width="1"/></svg>
<div class="a t" style="left:284px;top:383.0px;font-size:10px;line-height:16px;color:#4486f6">修改编码</div>
<div class="a t" style="left:261px;top:400.5px;font-size:10px;line-height:16px;color:#8a8f9c">赠品：</div>
<div class="a t" style="left:293px;top:400.5px;font-size:10px;line-height:16px;color:#f26868;letter-spacing:-0.2px">1元赠品服务费*1 ,中国插</div>
<div class="a t" style="left:261px;top:414.5px;font-size:10px;line-height:16px;color:#f26868">件*2</div>
<div class="a" style="left:418px;top:352.9px;width:74.5px;height:74px;background:#f5f7fa;border-radius:4px"></div>
<svg class="a" style="left:437px;top:352.9px" width="37" height="74"><use href="#flower"/></svg>
<div class="a t" style="left:671px;top:383.0px;font-size:9px;line-height:15px;color:#5a5d68;letter-spacing:-0.3px">100069922401</div>
<svg class="a" style="left:730px;top:385.0px" width="10" height="10" viewBox="0 0 10 10"><rect x="0.6" y="3" width="6.4" height="6.4" fill="none" stroke="#2f3142" stroke-width="1.1"/><path d="M3 3V0.6h6.4V7H7" fill="none" stroke="#2f3142" stroke-width="1.1"/></svg>
<div class="a t" style="left:838px;top:383.0px;font-size:9.5px;line-height:15px;color:#5a5d68;letter-spacing:-0.3px">中-1-1-1/2</div>
<svg class="a" style="left:880px;top:385.0px" width="10" height="10" viewBox="0 0 10 10"><rect x="0.6" y="3" width="6.4" height="6.4" fill="none" stroke="#2f3142" stroke-width="1.1"/><path d="M3 3V0.6h6.4V7H7" fill="none" stroke="#2f3142" stroke-width="1.1"/></svg>
<div class="a t" style="left:1244px;top:375.0px;font-size:11px;line-height:13px;color:#4486f6">X</div>
<div class="a t" style="left:1255px;top:375.0px;font-size:11px;line-height:13px;color:#5a5d68">1</div>
<div class="a t" style="left:1243px;top:390.0px;font-size:11px;line-height:13px;color:#e8453c;font-weight:bold">¥</div>
<div class="a t" style="left:1256px;top:390.0px;font-size:11px;line-height:13px;color:#5a5d68">0</div>
<div class="a c" style="left:1310px;top:380.0px;width:45px;height:20px;background:#fdeced;border-radius:3px;font-size:10px;color:#e8453c">未锁单</div>
<svg class="a" style="left:1361px;top:383.0px" width="12" height="13" viewBox="0 0 12 13"><path d="M3 6V4a3 3 0 0 1 6 0v2" fill="none" stroke="#5a5d68" stroke-width="1.2"/><rect x="0.8" y="6" width="10.4" height="6.3" rx="1" fill="none" stroke="#5a5d68" stroke-width="1.2"/><circle cx="6" cy="9" r="0.9" fill="#5a5d68"/></svg>
<div class="a c" style="left:1391.5px;top:380.0px;width:45px;height:20px;background:#fdeced;border-radius:3px;font-size:10px;color:#e8453c">已作废</div>
<div class="a" style="left:1477px;top:390.5px;width:3px;height:1px;background:#b0b3bb"></div>
<div class="a" style="left:1511px;top:384.0px;width:5px;height:14px;overflow:hidden"><div class="a t" style="left:0;top:0;font-size:10px;line-height:14px;color:#5a5d68">中</div></div>
<div class="a" style="left:175px;top:437.0px;width:1341px;height:1px;background:#ebedf2"></div>

<div class="a t" style="left:1041px;top:369.5px;font-size:9.5px;line-height:16px;color:#5a5d68">卖家备注:</div>
<svg class="a" style="left:1091px;top:372.0px" width="9" height="9" viewBox="0 0 9 9"><path d="M1 0.5v8.5" stroke="#8a8d96" stroke-width="1.2"/><path d="M1.6 0.8h6.6L6.8 3l1.4 2.2H1.6z" fill="#8a8d96"/></svg>
<div class="a t" style="left:1041px;top:390.5px;font-size:9.5px;line-height:16px;color:#5a5d68">厂家备注:</div>
<svg class="a" style="left:1093px;top:393.5px" width="9" height="9" viewBox="0 0 9 9"><path d="M1 0.5v8.5" stroke="#8a8d96" stroke-width="1.2"/><path d="M1.6 0.8h6.6L6.8 3l1.4 2.2H1.6z" fill="#8a8d96"/></svg>
<div class="a t" style="left:1104px;top:390.5px;font-size:10px;line-height:16px;color:#8a93ad">(点击可设置)</div>


<div class="a" style="left:175px;top:438.9px;width:74.5px;height:74.5px;background:#f5f7fa;border-radius:4px"></div>
<svg class="a" style="left:194px;top:438.9px" width="37" height="74.5"><use href="#flower"/></svg>
<div class="a t pn" style="left:261px;top:439.5px">乌柳心诀-不良人-画江湖-202408</div>
<div class="a t pn" style="left:261px;top:453.0px">1700015</div>
<svg class="a" style="left:270px;top:478.5px" width="11" height="11" viewBox="0 0 11 11"><path d="M2.3 7.8L2.7 5.6 7.2 1.1a1 1 0 0 1 1.4 0l0.5 0.5a1 1 0 0 1 0 1.4L4.6 7.5z" fill="none" stroke="#4486f6" stroke-width="0.9" stroke-linejoin="round"/><path d="M0.5 10.2h10" stroke="#4486f6" stroke-width="1"/></svg>
<div class="a t" style="left:284px;top:477.5px;font-size:10px;line-height:16px;color:#4486f6">修改编码</div>
<div class="a t" style="left:261px;top:495.0px;font-size:10px;line-height:16px;color:#8a8f9c">赠品：</div>
<div class="a t" style="left:293px;top:495.0px;font-size:10px;line-height:16px;color:#f26868;letter-spacing:-0.2px">1元赠品服务费*1 ,中国插</div>
<div class="a t" style="left:261px;top:509.0px;font-size:10px;line-height:16px;color:#f26868">件*2</div>
<div class="a" style="left:418px;top:447.4px;width:74.5px;height:74px;background:#f5f7fa;border-radius:4px"></div>
<svg class="a" style="left:437px;top:447.4px" width="37" height="74"><use href="#flower"/></svg>
<div class="a t" style="left:671px;top:477.5px;font-size:9px;line-height:15px;color:#5a5d68;letter-spacing:-0.3px">100069922402</div>
<svg class="a" style="left:730px;top:479.5px" width="10" height="10" viewBox="0 0 10 10"><rect x="0.6" y="3" width="6.4" height="6.4" fill="none" stroke="#2f3142" stroke-width="1.1"/><path d="M3 3V0.6h6.4V7H7" fill="none" stroke="#2f3142" stroke-width="1.1"/></svg>
<div class="a t" style="left:838px;top:477.5px;font-size:9.5px;line-height:15px;color:#5a5d68;letter-spacing:-0.3px">中-1-1-2/2</div>
<svg class="a" style="left:880px;top:479.5px" width="10" height="10" viewBox="0 0 10 10"><rect x="0.6" y="3" width="6.4" height="6.4" fill="none" stroke="#2f3142" stroke-width="1.1"/><path d="M3 3V0.6h6.4V7H7" fill="none" stroke="#2f3142" stroke-width="1.1"/></svg>
<div class="a t" style="left:1244px;top:469.5px;font-size:11px;line-height:13px;color:#4486f6">X</div>
<div class="a t" style="left:1255px;top:469.5px;font-size:11px;line-height:13px;color:#5a5d68">1</div>
<div class="a t" style="left:1243px;top:484.5px;font-size:11px;line-height:13px;color:#e8453c;font-weight:bold">¥</div>
<div class="a t" style="left:1256px;top:484.5px;font-size:11px;line-height:13px;color:#5a5d68">0</div>
<div class="a c" style="left:1310px;top:474.5px;width:45px;height:20px;background:#fdeced;border-radius:3px;font-size:10px;color:#e8453c">未锁单</div>
<svg class="a" style="left:1361px;top:477.5px" width="12" height="13" viewBox="0 0 12 13"><path d="M3 6V4a3 3 0 0 1 6 0v2" fill="none" stroke="#5a5d68" stroke-width="1.2"/><rect x="0.8" y="6" width="10.4" height="6.3" rx="1" fill="none" stroke="#5a5d68" stroke-width="1.2"/><circle cx="6" cy="9" r="0.9" fill="#5a5d68"/></svg>
<div class="a c" style="left:1391.5px;top:474.5px;width:45px;height:20px;background:#fdeced;border-radius:3px;font-size:10px;color:#e8453c">已作废</div>
<div class="a" style="left:1477px;top:485.0px;width:3px;height:1px;background:#b0b3bb"></div>
<div class="a" style="left:1511px;top:478.5px;width:5px;height:14px;overflow:hidden"><div class="a t" style="left:0;top:0;font-size:10px;line-height:14px;color:#5a5d68">中</div></div>
<div class="a" style="left:175px;top:531.5px;width:1341px;height:1px;background:#ebedf2"></div>

<div class="a" style="left:175px;top:531px;width:1341px;height:1px;background:#e6ebf5"></div>
<div class="a" style="left:175px;top:540px;width:1341px;height:1px;background:#e6ebf5"></div>

<!-- floating help -->
<div class="a" style="left:1499px;top:335px;width:30px;height:37px;background:#ea5b6d;border-radius:6px 0 0 6px"></div>
<svg class="a" style="left:1499px;top:335px" width="27" height="37" viewBox="0 0 27 37"><path d="M9 14.5c0-3.3 2.4-5.3 5.2-5.3s5.2 1.8 5.2 4.8c0 3.6-4.6 3.9-4.6 8.3" fill="none" stroke="#fff" stroke-width="3.2" stroke-linecap="round"/><circle cx="14.8" cy="27" r="1.9" fill="#fff"/><path d="M27 15l-2.5 2.5 2.5 2.5" fill="none" stroke="#fff" stroke-width="1.6"/></svg>
<!--CONTENT-->
</body></html>
